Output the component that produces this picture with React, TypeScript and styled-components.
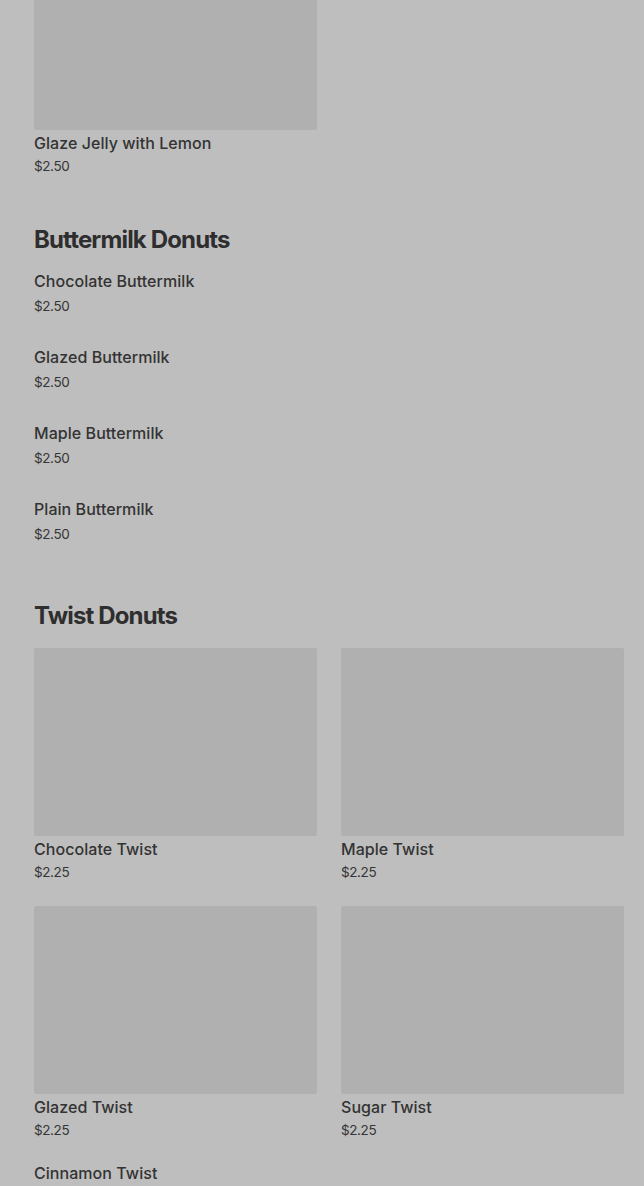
import React from "react";
import styled, { createGlobalStyle } from "styled-components";

const GlobalStyle = createGlobalStyle`
  html, body {
    margin: 0;
    padding: 0;
    background: #bebebe;
    overflow: hidden;
  }
  body {
    font-family: Inter, "Noto Sans", "Liberation Sans", sans-serif;
    color: #2f2f2f;
  }
`;

const Page = styled.main`
  display: flex;
  flex-direction: column;
  gap: 50px;
  padding: 0 20px 0 34px;
  margin-top: -58px;
  height: 1244px;
  overflow: hidden;
  background: #bebebe;
`;

const Section = styled.section`
  display: flex;
  flex-direction: column;
`;

const Heading = styled.h2`
  margin: 0 0 18px;
  font-size: 24px;
  line-height: 28px;
  font-weight: 700;
  letter-spacing: -0.85px;
  color: #2e2e2e;
`;

const Grid = styled.div`
  display: grid;
  grid-template-columns: repeat(2, 283px);
  column-gap: 24px;
  row-gap: 24px;
`;

const Card = styled.div`
  display: flex;
  flex-direction: column;
`;

const Thumb = styled.div`
  height: 188px;
  background: #b0b0b0;
  border-radius: 2px;
`;

const Name = styled.div<{ $offset?: number }>`
  margin-top: ${(p) => p.$offset ?? 0}px;
  font-size: 16px;
  line-height: 24px;
  font-weight: 500;
  letter-spacing: 0.05px;
  color: #333333;
  white-space: nowrap;
`;

const Price = styled.div<{ $gap?: number }>`
  margin-top: ${(p) => p.$gap ?? 1}px;
  font-size: 13.5px;
  line-height: 20px;
  font-weight: 400;
  letter-spacing: -0.4px;
  color: #353535;
`;

const List = styled.div`
  display: flex;
  flex-direction: column;
  gap: 21px;
  margin-top: -3px;
`;

const ListItem = styled.div`
  display: flex;
  flex-direction: column;
  padding: 0 0 8px;
`;

type Item = { name: string; price: string; image?: boolean };

const GridCard = ({ name, price, image = true }: Item) => (
  <Card>
    {image && <Thumb />}
    <Name $offset={image ? 1 : -3}>{name}</Name>
    <Price>{price}</Price>
  </Card>
);

const buttermilk: Item[] = [
  { name: "Chocolate Buttermilk", price: "$2.50" },
  { name: "Glazed Buttermilk", price: "$2.50" },
  { name: "Maple Buttermilk", price: "$2.50" },
  { name: "Plain Buttermilk", price: "$2.50" },
];

const twists: Item[] = [
  { name: "Chocolate Twist", price: "$2.25" },
  { name: "Maple Twist", price: "$2.25" },
  { name: "Glazed Twist", price: "$2.25" },
  { name: "Sugar Twist", price: "$2.25" },
  { name: "Cinnamon Twist", price: "$2.25", image: false },
];

export default function App() {
  return (
    <>
      <GlobalStyle />
      <Page>
        <Section>
          <Grid>
            <GridCard name="Glaze Jelly with Lemon" price="$2.50" />
          </Grid>
        </Section>
        <Section>
          <Heading>Buttermilk Donuts</Heading>
          <List>
            {buttermilk.map((it) => (
              <ListItem key={it.name}>
                <Name>{it.name}</Name>
                <Price $gap={3}>{it.price}</Price>
              </ListItem>
            ))}
          </List>
        </Section>
        <Section>
          <Heading>Twist Donuts</Heading>
          <Grid>
            {twists.map((it) => (
              <GridCard key={it.name} {...it} />
            ))}
          </Grid>
        </Section>
      </Page>
    </>
  );
}
